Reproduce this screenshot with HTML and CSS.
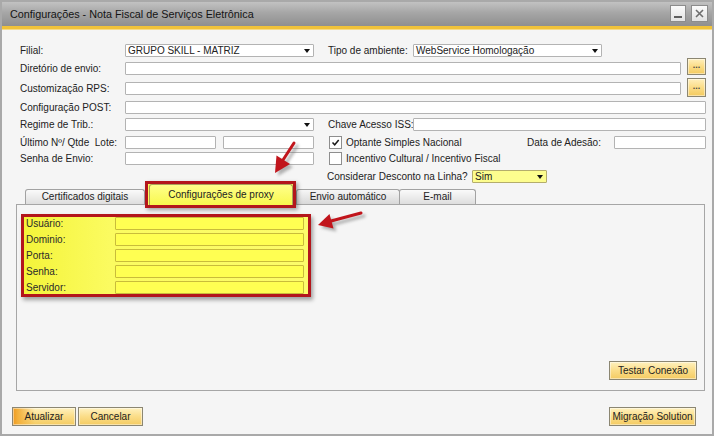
FILE: index.html
```html
<!DOCTYPE html>
<html lang="pt-BR">
<head>
<meta charset="utf-8">
<title>Configurações - Nota Fiscal de Serviços Eletrônica</title>
<link rel="stylesheet" href="styles.css">
</head>
<body>
<div class="window">
  <div class="titlebar">
    <span class="title">Configurações - Nota Fiscal de Serviços Eletrônica</span>
    <div class="wbtns">
      <span class="wbtn wmin"><i></i></span>
      <span class="wbtn wclose">
        <svg width="9" height="9" viewBox="0 0 9 9"><path d="M1 1 L8 8 M8 1 L1 8" stroke="#6e6e6e" stroke-width="1.6"/></svg>
      </span>
    </div>
  </div>

  <div class="form">
    <!-- row 1 -->
    <span class="lbl">Filial:</span>
    <div class="select"><span>GRUPO SKILL - MATRIZ</span><i class="arr"></i></div>
    <span></span>
    <span class="lbl">Tipo de ambiente:</span>
    <div class="select w189"><span>WebService Homologação</span><i class="arr"></i></div>

    <!-- row 2 -->
    <span class="lbl">Diretório de envio:</span>
    <div class="span4 withbtn"><div class="inp grow"></div><span class="dots">...</span></div>

    <!-- row 3 -->
    <span class="lbl">Customização RPS:</span>
    <div class="span4 withbtn"><div class="inp grow"></div><span class="dots tall">...</span></div>

    <!-- row 4 -->
    <span class="lbl">Configuração POST:</span>
    <div class="span4"><div class="inp"></div></div>

    <!-- row 5 -->
    <span class="lbl">Regime de Trib.:</span>
    <div class="select"><span></span><i class="arr"></i></div>
    <span></span>
    <span class="lbl">Chave Acesso ISS:</span>
    <div class="inp"></div>

    <!-- row 6 -->
    <span class="lbl">Último Nº/ Qtde&nbsp; Lote:</span>
    <div class="pair"><div class="inp"></div><div class="inp"></div></div>
    <span></span>
    <div class="span2 right">
      <div class="chkitem fixed">
        <span class="chk"><svg width="11" height="11" viewBox="0 0 11 11"><path d="M2.5 5.5 L4.7 7.8 L8.7 3" fill="none" stroke="#1a1a1a" stroke-width="1.5"/></svg></span>
        <span>Optante Simples Nacional</span>
      </div>
      <span class="lbl adesao">Data de Adesão:</span>
      <div class="inp grow"></div>
    </div>

    <!-- row 7 -->
    <span class="lbl">Senha de Envio:</span>
    <div class="inp"></div>
    <span></span>
    <div class="span2 right">
      <div class="chkitem">
        <span class="chk"></span>
        <span>Incentivo Cultural / Incentivo Fiscal</span>
      </div>
    </div>

    <!-- row 8 -->
    <span></span><span></span><span></span>
    <div class="span2 right desconto">
      <span class="lbl dlabel">Considerar Desconto na Linha?</span>
      <div class="select sim"><span>Sim</span><i class="arr"></i></div>
    </div>
  </div>

  <div class="tabs">
    <div class="tabstrip">
      <div class="tab t1">Certificados digitais</div>
      <div class="tab-hl"><div class="tab sel">Configurações de proxy</div></div>
      <div class="tab t3">Envio automático</div>
      <div class="tab t4">E-mail</div>
    </div>
    <div class="panel">
      <div class="proxy">
        <div class="prow"><span>Usuário:</span><div class="pin"></div></div>
        <div class="prow"><span>Dominio:</span><div class="pin"></div></div>
        <div class="prow"><span>Porta:</span><div class="pin"></div></div>
        <div class="prow"><span>Senha:</span><div class="pin"></div></div>
        <div class="prow"><span>Servidor:</span><div class="pin"></div></div>
      </div>
      <div class="panel-foot"><span class="btn w88">Testar Conexão</span></div>
    </div>
  </div>

  <div class="footer">
    <span class="btn primary w64">Atualizar</span>
    <span class="btn w65">Cancelar</span>
    <span class="btn w87 push">Migração Solution</span>
  </div>

  <svg class="annot" width="714" height="436" viewBox="0 0 714 436">
    <defs>
      <filter id="sh" x="-20%" y="-20%" width="140%" height="140%">
        <feGaussianBlur stdDeviation="1.6"/>
      </filter>
    </defs>
    <g fill="#777" stroke="#777" opacity="0.55" filter="url(#sh)" transform="translate(3 3)">
      <path d="M294 143 L283 160" stroke-width="3.2" stroke-linecap="round"/>
      <polygon points="275,173 290,164 276.5,155.5" stroke="none"/>
      <path d="M361 213 L331 221" stroke-width="3.2" stroke-linecap="round"/>
      <polygon points="318,225 333.5,228.5 329.5,214" stroke="none"/>
    </g>
    <g fill="#c1151c" stroke="#c1151c">
      <path d="M294 143 L283 160" stroke-width="3" stroke-linecap="round"/>
      <polygon points="275,173 290,164 276.5,155.5" stroke="none"/>
      <path d="M361 213 L331 221" stroke-width="3" stroke-linecap="round"/>
      <polygon points="318,225 333.5,228.5 329.5,214" stroke="none"/>
    </g>
  </svg>
</div>
</body>
</html>
```
FILE: styles.css
```css
html, body {
  margin: 0;
  padding: 0;
  background: #ffffff;
}

body {
  font-family: "Liberation Sans", Arial, sans-serif;
  font-size: 10px;
  color: #222222;
}

.window {
  position: relative;
  width: 714px;
  height: 436px;
  box-sizing: border-box;
  border: 2px solid #a9a9a9;
  background: #f5f5f5;
  display: flex;
  flex-direction: column;
}

/* ---------- title bar ---------- */
.titlebar {
  height: 24px;
  display: flex;
  justify-content: space-between;
  align-items: flex-start;
  padding: 0 4px 0 8px;
  background: linear-gradient(#c2c2c2, #a6a6a6 45%, #8f8f8f);
  border-bottom: 3px solid #f0c23a;
  box-shadow: 0 1px 0 #f7dc8a;
}

.title {
  font-size: 10.8px;
  line-height: 25px;
  color: #141414;
}

.wbtns {
  display: flex;
  gap: 5px;
  margin-top: 3px;
}

.wbtn {
  width: 16px;
  height: 17px;
  box-sizing: border-box;
  border: 1px solid #8c8c8c;
  background: linear-gradient(#fbfbfb, #e2e2e2);
  display: flex;
  align-items: center;
  justify-content: center;
  position: relative;
}

.wbtn.wclose {
  width: 17px;
}

.wmin i {
  position: absolute;
  left: 3px;
  right: 3px;
  bottom: 3px;
  height: 2px;
  background: #5e5e5e;
}

/* ---------- form ---------- */
.form {
  display: grid;
  grid-template-columns: 105px 189px 14px 85px 293px;
  grid-template-rows: 18px 20px 19px 17px 18px 16px 18px 11px;
  padding: 15px 6px 0 18px;
  align-items: start;
}

.lbl {
  white-space: nowrap;
  line-height: 13px;
  height: 13px;
  color: #222;
}

.inp {
  height: 13px;
  box-sizing: border-box;
  border: 1px solid #b3b3b3;
  border-radius: 1px;
  background: #ffffff;
}

.grow {
  flex: 1;
}

.select {
  height: 13px;
  box-sizing: border-box;
  border: 1px solid #b3b3b3;
  border-radius: 1px;
  background: #ffffff;
  display: flex;
  align-items: center;
  justify-content: space-between;
  padding: 0 3px 0 2px;
  line-height: 11px;
  white-space: nowrap;
}

.select.w189 {
  width: 189px;
}

.arr {
  width: 0;
  height: 0;
  border-left: 3.5px solid transparent;
  border-right: 3.5px solid transparent;
  border-top: 4px solid #111;
}

.span4 {
  grid-column: 2 / 6;
  display: flex;
}

.span4 .inp {
  flex: 1;
}

.withbtn {
  gap: 6px;
}

.dots {
  width: 19px;
  height: 17px;
  box-sizing: border-box;
  margin-top: -4px;
  border: 1px solid #8b8672;
  background: linear-gradient(#fff0bd, #fbdc86 50%, #f3ca5f);
  box-shadow: inset 0 0 0 1px rgba(255, 255, 255, 0.45);
  font-size: 9px;
  font-weight: bold;
  line-height: 12px;
  text-align: center;
  color: #4a4a4a;
  letter-spacing: 0;
}

.dots.tall {
  height: 19px;
  line-height: 14px;
}

.pair {
  display: flex;
  gap: 7px;
}

.pair .inp {
  flex: 1;
}

.span2 {
  grid-column: 4 / 6;
}

.right {
  display: flex;
  align-items: flex-start;
}

.chkitem {
  display: flex;
  align-items: center;
  gap: 4px;
  height: 13px;
  margin-left: 1px;
  white-space: nowrap;
  line-height: 13px;
}

.chkitem.fixed {
  width: 198px;
}

.chk {
  width: 13px;
  height: 13px;
  box-sizing: border-box;
  border: 1px solid #8e8e8e;
  background: #ffffff;
  display: flex;
  align-items: center;
  justify-content: center;
}

.adesao {
  width: 87px;
}

.desconto {
  margin-left: -1px;
}

.dlabel {
  width: 145px;
}

.select.sim {
  width: 75px;
  background: #fdfd8e;
  border-color: #b4ad6c;
  padding-left: 2px;
}

/* ---------- tabs ---------- */
.tabs {
  margin: 0 7px 0 14px;
}

.tabstrip {
  height: 23px;
  display: flex;
  align-items: flex-end;
  padding-left: 9px;
}

.tab {
  height: 15px;
  box-sizing: border-box;
  border: 1px solid #a2a2a2;
  border-bottom: none;
  border-radius: 3px 3px 0 0;
  background: linear-gradient(#fafafa, #dedede);
  text-align: center;
  line-height: 14px;
  white-space: nowrap;
  color: #222;
}

.t1 { width: 120px; }
.t3 { width: 104px; background: linear-gradient(#f6f6f6, #d8d8d8); }
.t4 { width: 77px; margin-left: -1px; }

.tab-hl {
  position: relative;
  z-index: 2;
  width: 151px;
  height: 27px;
  box-sizing: border-box;
  margin-bottom: -4px;
  border: 3px solid #b3161c;
  background: #fbfb5c;
  box-shadow: 2px 2px 4px rgba(0, 0, 0, 0.35);
  padding: 0 0 0 1px;
  display: flex;
  align-items: flex-end;
}

.tab.sel {
  width: 100%;
  height: 21px;
  border-color: #a9a35a;
  background: linear-gradient(#ffff8a, #f8f84e);
  line-height: 20px;
}

.panel {
  height: 187px;
  box-sizing: border-box;
  border: 1px solid #a6a6a6;
  padding: 9px 7px 10px 4px;
  display: flex;
  flex-direction: column;
}

.proxy {
  width: 290px;
  height: 83px;
  box-sizing: border-box;
  border: 3px solid #b3161c;
  background: linear-gradient(to right, #f4f43a, #fbfb60 30%, #fcfc6a);
  box-shadow: 2px 3px 4px rgba(0, 0, 0, 0.35);
  padding: 0 4px 0 2px;
  display: flex;
  flex-direction: column;
  gap: 3px;
}

.prow {
  height: 13px;
  display: flex;
  line-height: 13px;
}

.prow span {
  width: 89px;
  color: #2a2a2a;
}

.pin {
  flex: 1;
  box-sizing: border-box;
  border: 1px solid #c9bc3a;
  border-radius: 1px;
  background: #ffff52;
}

.panel-foot {
  margin-top: auto;
  display: flex;
  justify-content: flex-end;
}

/* ---------- buttons ---------- */
.btn {
  height: 19px;
  box-sizing: border-box;
  border: 1px solid #8b8672;
  background: linear-gradient(#fff1bf, #fbdd88 50%, #f4cb62);
  box-shadow: inset 0 0 0 1px rgba(255, 255, 255, 0.45);
  line-height: 17px;
  text-align: center;
  white-space: nowrap;
  color: #222;
}

.btn.primary {
  background:
    linear-gradient(to right, #ee9a20 0, #f3b03c 5px, rgba(248, 210, 110, 0) 22px),
    linear-gradient(#fff1bf, #fbdd88 50%, #f4cb62);
}

.w64 { width: 64px; }
.w65 { width: 65px; }
.w87 { width: 87px; }
.w88 { width: 88px; }

.footer {
  display: flex;
  gap: 2px;
  padding: 16px 16px 0 10px;
}

.push {
  margin-left: auto;
}

/* ---------- annotation overlay ---------- */
.annot {
  position: absolute;
  left: -2px;
  top: -2px;
  pointer-events: none;
  z-index: 5;
}
```
